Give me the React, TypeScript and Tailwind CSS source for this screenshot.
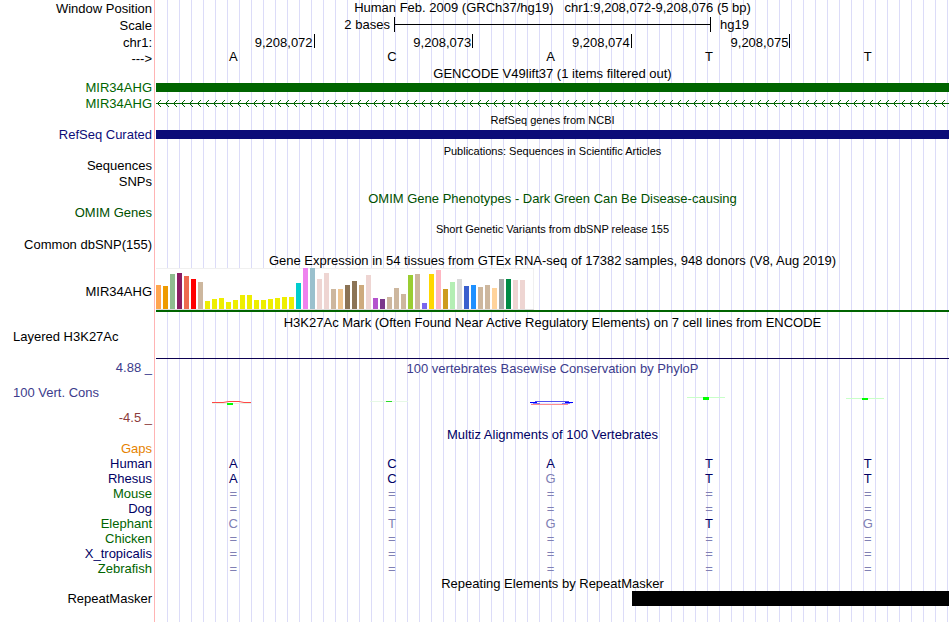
import type { ReactNode } from "react";

const GRID =
  "bg-[repeating-linear-gradient(to_right,transparent_0px,transparent_11px,#dcdcf8_11px,#dcdcf8_12px)]";

const BASES = ["A", "C", "A", "T", "T"];
const POSITIONS = ["9,208,072", "9,208,073", "9,208,074", "9,208,075"];

const SPECIES: { name: string; color: string; bases: string }[] = [
  { name: "Human", color: "text-[#000064]", bases: "ACATT" },
  { name: "Rhesus", color: "text-[#000064]", bases: "ACGTT" },
  { name: "Mouse", color: "text-[#006400]", bases: "=====" },
  { name: "Dog", color: "text-[#000064]", bases: "=====" },
  { name: "Elephant", color: "text-[#006400]", bases: "CTGTG" },
  { name: "Chicken", color: "text-[#006400]", bases: "=====" },
  { name: "X_tropicalis", color: "text-[#000064]", bases: "=====" },
  { name: "Zebrafish", color: "text-[#006400]", bases: "=====" },
];

const TISSUES: [number, string][] = [
  [24, "#ffa54f"], [23, "#ee9a00"], [35, "#8fbc8f"], [36, "#8b1c62"], [33, "#ee6a50"],
  [30, "#ff0000"], [27, "#cdb79e"], [8, "#eeee00"], [10, "#eeee00"], [11, "#eeee00"],
  [7, "#eeee00"], [9, "#eeee00"], [14, "#eeee00"], [14, "#eeee00"], [9, "#eeee00"],
  [9, "#eeee00"], [10, "#eeee00"], [11, "#eeee00"], [12, "#eeee00"], [12, "#eeee00"],
  [26, "#00cdcd"], [41, "#ee82ee"], [41, "#9ac0cd"], [30, "#eed5d2"], [36, "#eed5d2"],
  [20, "#cdb79e"], [20, "#eec591"], [24, "#8b7355"], [28, "#8b7355"], [24, "#cdaa7d"],
  [34, "#eed5d2"], [11, "#b452cd"], [10, "#7a378b"], [12, "#cdb79e"], [21, "#cdb79e"],
  [15, "#cdb79e"], [34, "#9acd32"], [35, "#cdb79e"], [6, "#7a67ee"], [35, "#ffd700"],
  [39, "#ffb6c1"], [20, "#cd9b1d"], [27, "#b4eeb4"], [30, "#d9d9d9"], [23, "#3a5fcd"],
  [24, "#1e90ff"], [22, "#cdb79e"], [24, "#cdb79e"], [21, "#ffd39b"], [30, "#a6a6a6"],
  [30, "#008b45"], [29, "#eed5d2"], [29, "#eed5d2"], [0, "#ff00ff"],
];

type RowProps = {
  height: string;
  label?: ReactNode;
  labelClass?: string;
  trackClass?: string;
  children?: ReactNode;
};

function Row({
  height,
  label,
  labelClass = "justify-end",
  trackClass = "items-center",
  children,
}: RowProps) {
  return (
    <div className={`flex ${height}`}>
      <div className={`mr-px flex w-[155px] shrink-0 items-center border-r border-[#ffb4b4] pr-0.5 ${labelClass}`}>
        {label}
      </div>
      <div className={`flex min-w-0 flex-1 ${GRID} ${trackClass}`}>{children}</div>
    </div>
  );
}

function Title({ children, className = "" }: { children: ReactNode; className?: string }) {
  return <h2 className={`w-full text-center ${className}`}>{children}</h2>;
}

function baseColor(base: string, index: number) {
  return base === BASES[index] ? "text-[#000064]" : "text-[#8080b4]";
}

function Letters({ bases, colored = false }: { bases: string[]; colored?: boolean }) {
  return (
    <div className="grid w-full grid-cols-5">
      {bases.map((base, i) => (
        <span key={i} className={`pr-1 text-center ${colored ? baseColor(base, i) : "leading-3"}`}>
          {base}
        </span>
      ))}
    </div>
  );
}

function Arrows() {
  return (
    <svg className="h-[7px] w-full" shapeRendering="crispEdges" aria-hidden="true">
      <defs>
        <pattern id="intron" width="8" height="7" patternUnits="userSpaceOnUse">
          <path
            fill="#006400"
            d="M0 3h8v1H0zM2 2h1v1H2zM3 1h1v1H3zM4 0h1v1H4zM2 4h1v1H2zM3 5h1v1H3zM4 6h1v1H4z"
          />
        </pattern>
      </defs>
      <rect width="100%" height="7" fill="url(#intron)" />
    </svg>
  );
}

function Conservation() {
  return (
    <div className="grid w-full grid-cols-5 justify-items-center">
      <svg width="52" height="12" aria-hidden="true">
        <path d="M3 5.500H14L20 4.500H30L35 5.500H42" fill="none" stroke="#ff4646" />
        <path d="M3 6.500H42" stroke="#e6f5e6" />
        <rect x="18" y="6" width="6" height="2" fill="#00ff00" />
      </svg>
      <svg width="52" height="12" aria-hidden="true">
        <path d="M2 4.500H40" stroke="#e6f8e6" />
        <rect x="18" y="4" width="6" height="1" fill="#28dc28" />
      </svg>
      <svg width="52" height="12" aria-hidden="true">
        <path d="M5 6.500H46" stroke="#e6e6ff" />
        <path d="M5 7.500H42" stroke="#ff8c8c" />
        <path d="M9 4.500H43" stroke="#5050f0" />
        <path d="M4 5.500H11M39 5.500H47" stroke="#0000ff" />
        <path d="M7 6.500H14M36 6.500H44" stroke="#7878ff" />
      </svg>
      <svg width="52" height="12" aria-hidden="true">
        <path d="M2 0.500H40" stroke="#c8ffc8" />
        <rect x="18" y="0" width="6" height="3" fill="#00ff00" />
      </svg>
      <svg width="52" height="12" aria-hidden="true">
        <path d="M2 1.500H40" stroke="#c8ffc8" />
        <rect x="18" y="1" width="6" height="2" fill="#00ff00" />
      </svg>
    </div>
  );
}

export default function App() {
  return (
    <main className="bg-white pr-px font-['Liberation_Sans',Arial,sans-serif] text-[13px] leading-4 whitespace-nowrap text-black">
      <Row height="h-[17px]" label="Window Position" trackClass="items-start">
        <h1 className="w-full text-center whitespace-pre">
          {"Human Feb. 2009 (GRCh37/hg19)   chr1:9,208,072-9,208,076 (5 bp)"}
        </h1>
      </Row>
      <Row height="h-[17px]" label="Scale" trackClass="items-start">
        <span className="w-[30%] pr-1 text-right">2 bases</span>
        <span className="flex h-[15px] w-[40%] items-center border-x border-black">
          <span className="h-px w-full bg-black" />
        </span>
        <span className="pl-[9px]">hg19</span>
      </Row>
      <Row height="h-[17px]" label="chr1:" trackClass="items-start">
        <div className="grid w-full grid-cols-5">
          {POSITIONS.map((p) => (
            <span key={p} className="h-[14px] border-r border-black pr-px text-right leading-[18px]">
              {p}
            </span>
          ))}
        </div>
      </Row>
      <Row height="h-4" label="--->" trackClass="items-start">
        <Letters bases={BASES} />
      </Row>
      <Row height="h-[13px]">
        <Title>GENCODE V49lift37 (1 items filtered out)</Title>
      </Row>
      <Row height="h-4" label="MIR34AHG" labelClass="justify-end text-[#006400]" trackClass="items-start pt-[3px]">
        <div className="h-[9px] w-full bg-[#006400]" />
      </Row>
      <Row height="h-[15px]" label="MIR34AHG" labelClass="justify-end text-[#006400]">
        <Arrows />
      </Row>
      <Row height="h-4" trackClass="items-center pt-0.5">
        <Title className="text-[11px]">RefSeq genes from NCBI</Title>
      </Row>
      <Row height="h-4" label="RefSeq Curated" labelClass="justify-end text-[#0c0c78]" trackClass="items-start pt-[3px]">
        <div className="h-[9px] w-full bg-[#0c0c78]" />
      </Row>
      <Row height="h-[15px]">
        <Title className="text-[11px]">Publications: Sequences in Scientific Articles</Title>
      </Row>
      <Row height="h-4" label="Sequences" />
      <Row height="h-4" label="SNPs" />
      <Row height="h-[15px]" trackClass="items-start pt-px">
        <Title className="text-[#005000]">OMIM Gene Phenotypes - Dark Green Can Be Disease-causing</Title>
      </Row>
      <Row height="h-[15px]" label="OMIM Genes" labelClass="justify-end text-[#005000]" />
      <Row height="h-[17px]" trackClass="items-start pt-px">
        <Title className="text-[11px]">Short Genetic Variants from dbSNP release 155</Title>
      </Row>
      <Row height="h-[15px]" label="Common dbSNP(155)" />
      <Row height="h-4" trackClass="items-start pt-px">
        <Title>Gene Expression in 54 tissues from GTEx RNA-seq of 17382 samples, 948 donors (V8, Aug 2019)</Title>
      </Row>
      <Row
        height="h-11"
        label="MIR34AHG"
        labelClass="justify-end pt-1"
        trackClass="items-stretch border-b-2 border-[#006400]"
      >
        <div className="flex items-end gap-0.5 border-b border-[#dcdcdc] bg-white pr-0.5 shadow-[inset_-1px_1px_0_#f0f0f0]">
          {TISSUES.map(([height, color], i) => (
            <div key={i} className="w-[5px]" style={{ height, backgroundColor: color }} />
          ))}
        </div>
      </Row>
      <Row
        height="h-[46px]"
        label="Layered H3K27Ac"
        labelClass="justify-start pt-1 pl-[13px]"
        trackClass="items-start pt-[3px]"
      >
        <Title>H3K27Ac Mark (Often Found Near Active Regulatory Elements) on 7 cell lines from ENCODE</Title>
      </Row>
      <Row height="h-px">
        <div className="h-px w-full bg-[#0c0050]" />
      </Row>
      <Row height="h-[18px]" label="4.88 _" labelClass="justify-end text-[#3c3c8c]" trackClass="items-end">
        <Title className="text-[#3c3c8c]">100 vertebrates Basewise Conservation by PhyloP</Title>
      </Row>
      <Row
        height="h-8"
        label="100 Vert. Cons"
        labelClass="justify-start pl-[13px] text-[#3c3c8c]"
        trackClass="items-end"
      >
        <Conservation />
      </Row>
      <Row height="h-[18px]" label="-4.5 _" labelClass="justify-end text-[#8c3c3c]" />
      <Row height="h-4">
        <Title className="text-[#000064]">Multiz Alignments of 100 Vertebrates</Title>
      </Row>
      <Row height="h-[13px]" label="Gaps" labelClass="justify-end pb-0.5 text-[#e68200]" />
      {SPECIES.map(({ name, color, bases }) => (
        <Row key={name} height="h-[15px]" label={name} labelClass={`justify-end ${color}`}>
          <Letters bases={bases.split("")} colored />
        </Row>
      ))}
      <Row height="h-[15px]" trackClass="items-start">
        <Title>Repeating Elements by RepeatMasker</Title>
      </Row>
      <Row height="h-[15px]" label="RepeatMasker">
        <div className="ml-[60%] h-[15px] w-[40%] bg-black" />
      </Row>
      <Row height="h-4" />
    </main>
  );
}
